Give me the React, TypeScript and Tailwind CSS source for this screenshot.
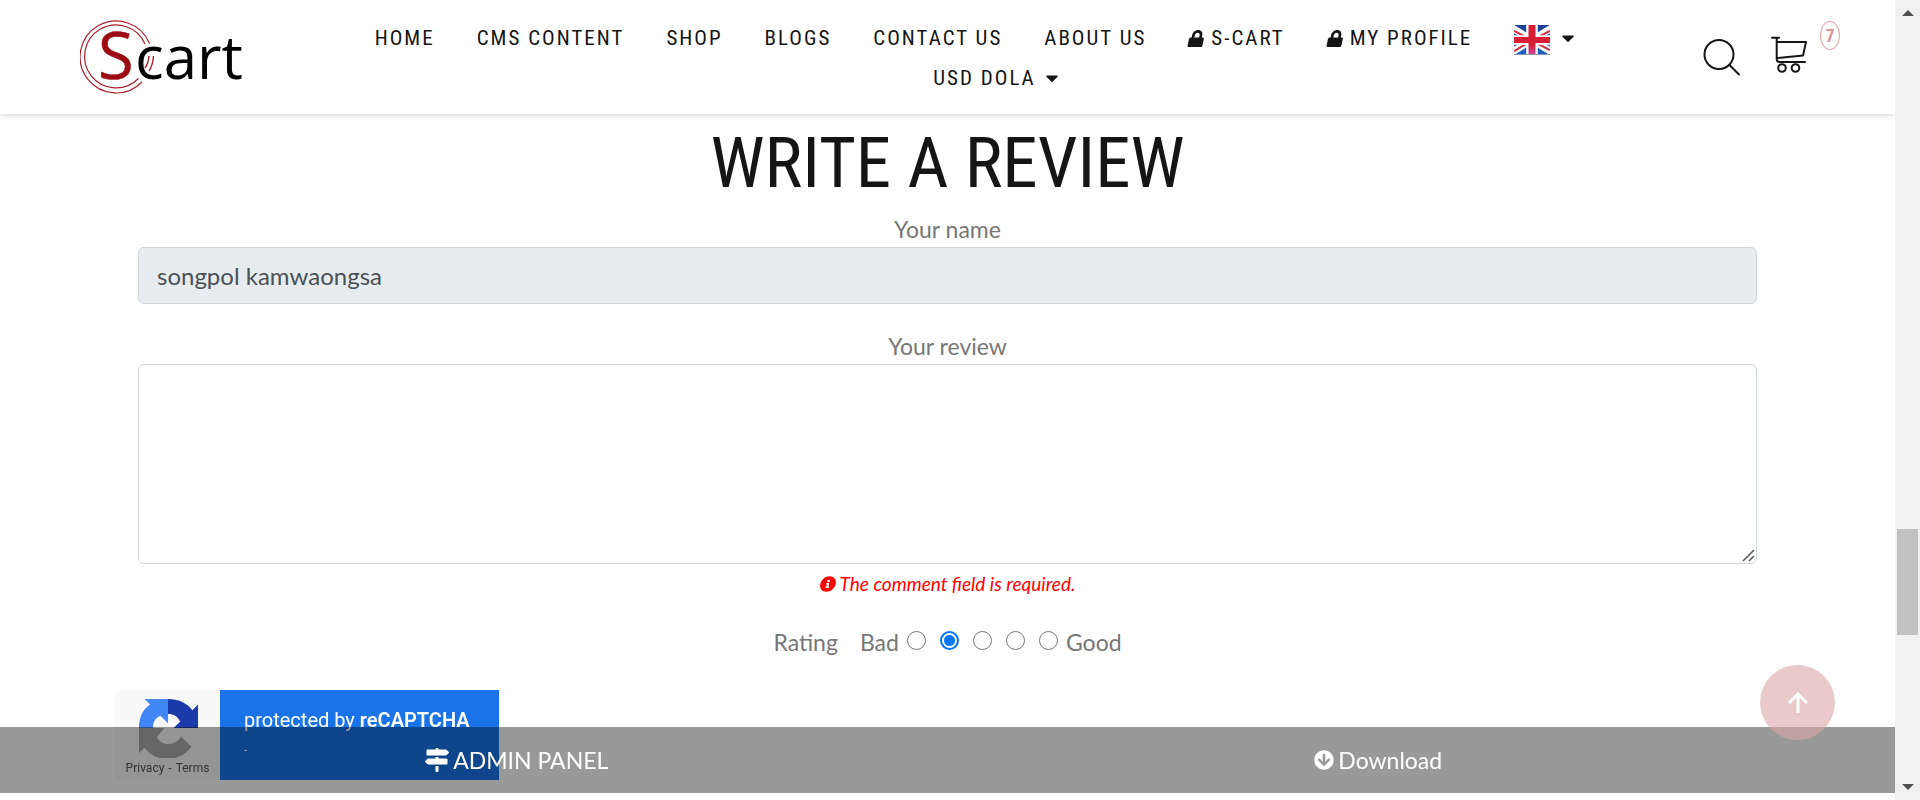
import React from "react";
import { FaArrowCircleDown, FaCaretDown, FaInfoCircle, FaLock, FaMapSigns } from "react-icons/fa";

const condensed = "font-['Roboto_Condensed','Liberation_Sans_Narrow',Roboto,sans-serif]";

function Logo() {
  return (
    <svg width="170" height="104" viewBox="0 -16 170 104" role="img" aria-label="Scart">
      <g fill="none" stroke="#a8202a" strokeWidth="1.2">
        <path d="M69.500 25.500A36 36 0 1 0 62 64" />
        <path d="M65 26A31.500 31.500 0 1 0 58.500 60.500" />
        <path d="M69 38q-.5 7-4 12M73.500 38q-.5 9-4.500 15" strokeWidth="1.400" />
      </g>
      <text x="18" y="61" fontSize="65" fill="#9c0c12" stroke="#9c0c12" strokeWidth=".6" className="font-['Open_Sans',sans-serif]">
        S
      </text>
      <text x="55" y="61" fontSize="60" fill="#000" className="font-['Open_Sans',sans-serif]">
        cart
      </text>
    </svg>
  );
}

function Flag() {
  return (
    <svg width="36" height="30" viewBox="0 0 31 31" preserveAspectRatio="none" role="img" aria-label="English">
      <defs>
        <linearGradient id="blue" x1="0" y1="0" x2="0" y2="1">
          <stop offset="0" stopColor="#1c3f94" />
          <stop offset="1" stopColor="#1e63c8" />
        </linearGradient>
        <linearGradient id="red" x1="0" y1="0" x2="0" y2="1">
          <stop offset=".65" stopColor="#d81e34" />
          <stop offset="1" stopColor="#c84a9a" />
        </linearGradient>
      </defs>
      <rect width="31" height="31" fill="url(#blue)" />
      <path d="M-3 2L34 29M34 2L-3 29" stroke="#fff" strokeWidth="7" />
      <path d="M0 6L11 13M31 6L20 13M0 27L11 19M31 26L20 19" stroke="#d8304a" strokeWidth="2" />
      <path d="M15.500 0V31M0 15.500H31" stroke="#fff" strokeWidth="10" />
      <path d="M0 15.500H31" stroke="#d81e34" strokeWidth="6" />
      <rect x="12.500" width="6" height="31" fill="url(#red)" />
      <path d="M0 30.500H31" stroke="#8b93b0" />
    </svg>
  );
}

const links: { label: string; locked?: boolean }[] = [
  { label: "Home" },
  { label: "CMS Content" },
  { label: "Shop" },
  { label: "Blogs" },
  { label: "Contact us" },
  { label: "About us" },
  { label: "S-Cart", locked: true },
  { label: "My profile", locked: true },
];

function Header() {
  return (
    <header className="flex h-[114px] items-start bg-white pl-20 pr-[55px] shadow-[0_1px_6px_rgba(0,0,0,0.18)]">
      <a href="#home" className="mt-0.5 shrink-0">
        <Logo />
      </a>
      <nav className="min-w-0 flex-1 px-[80px] pt-[22px]">
        <ul className={`flex flex-wrap justify-center gap-y-2 text-[21px] uppercase leading-8 tracking-[2px] text-[#151515] ${condensed}`}>
          {links.map(({ label, locked }) => (
            <li key={label} className="ml-[42px] first:ml-0">
              <a href="#nav" className="flex items-center gap-1.5">
                {locked && <FaLock className="size-[17px] -skew-x-12" />}
                {label}
              </a>
            </li>
          ))}
          <li className="ml-[42px]">
            <button type="button" className="flex h-8 items-center gap-2" aria-label="Language">
              <span className="pt-1"><Flag /></span>
              <FaCaretDown className="size-5" />
            </button>
          </li>
          <li className="ml-[42px]">
            <button type="button" className="flex items-center gap-1.5 uppercase tracking-[2px]">
              USD Dola
              <FaCaretDown className="size-5" />
            </button>
          </li>
        </ul>
      </nav>
      <div className="flex shrink-0 items-start text-[#151515]">
        <button type="button" aria-label="Search" className="mt-[38px]">
          <svg width="38" height="38" viewBox="0 0 38 38" fill="none" stroke="currentColor" strokeWidth="2" strokeLinecap="round">
            <circle cx="16" cy="16.500" r="14.500" />
            <path d="M26.500 27L36 36.500" />
          </svg>
        </button>
        <a href="#cart" className="ml-[29px] flex items-start" aria-label="Cart, 7 items">
          <svg className="mt-9" width="38" height="38" viewBox="0 0 38 38" fill="none" stroke="currentColor" strokeWidth="2" strokeLinecap="round" strokeLinejoin="round">
            <path d="M2 1.700H9M6.700 2V23Q6.700 26 9.500 26H35M7 6H36L33 19.500L7 22" />
            <circle cx="12" cy="32" r="3.800" />
            <circle cx="25.500" cy="32" r="3.800" />
          </svg>
          <span className={`ml-3 mt-[21px] flex h-[29px] w-5 items-center justify-center rounded-[50%] border border-[#e0a5a8] text-lg font-bold text-[#d99a9d] ${condensed}`}>
            7
          </span>
        </a>
      </div>
    </header>
  );
}

function ReviewForm() {
  return (
    <form className="mx-[138px] text-center text-[23px] leading-9 text-[#777]">
      <label htmlFor="name" className="block">Your name</label>
      <input
        id="name"
        readOnly
        defaultValue="songpol kamwaongsa"
        className="block h-[57px] w-full rounded-md border border-[#ced4da] bg-[#e9ecef] px-[18px] text-2xl text-[#495057] outline-none"
      />
      <label htmlFor="review" className="mt-6 block">Your review</label>
      <div className="relative">
        <textarea id="review" className="block h-[200px] w-full resize-none rounded-md border border-[#ced4da] bg-white px-[18px] py-2 text-2xl outline-none" />
        <svg className="absolute bottom-0.5 right-0.5" width="13" height="13" viewBox="0 0 13 13" stroke="#555" strokeWidth="1.500" aria-hidden="true">
          <path d="M1 12L12 1M7 12L12 7" />
        </svg>
      </div>
      <p className="mt-1 flex items-center justify-center gap-1 text-[19px] italic leading-8 text-[#f00]">
        <FaInfoCircle className="size-4 -skew-x-12" />
        The comment field is required.
      </p>
      <fieldset className="mt-6 flex items-center justify-center">
        <span className="mr-[22px]">Rating</span>
        <span className="mr-2">Bad</span>
        <span className="mb-1 flex gap-[14px]">
          {[1, 2, 3, 4, 5].map((n) => (
            <input
              key={n}
              type="radio"
              name="rating"
              aria-label={`${n} of 5`}
              defaultChecked={n === 2}
              className="size-[19px] appearance-none rounded-full border border-[#767676] bg-white checked:border-2 checked:border-[#0075ff] checked:bg-[radial-gradient(circle,#0075ff_5px,#fff_6px)]"
            />
          ))}
        </span>
        <span className="ml-2">Good</span>
      </fieldset>
    </form>
  );
}

function Recaptcha() {
  return (
    <div className="fixed bottom-5 left-[115px] flex h-[90px] font-[Roboto,sans-serif]">
      <div className="flex w-[105px] flex-col items-center rounded-l bg-[#f9f9f9] pt-2">
        <svg width="60" height="60" viewBox="0 0 64 64" aria-hidden="true">
          <path d="M64 32V7l-6 6C52 5 43 1 32 1v16c6 0 10 2 13 8l-7 7z" fill="#1c3aa9" />
          <path d="M32 1H7l6 6C5 12 1 21 1 32h15c0-7 3-11 8-13l8 8z" fill="#4285f4" />
          <path d="M1 32v27l6-6c6 8 14 12 25 12 10 0 19-5 25-13L46 41c-3 5-8 8-14 8-5 0-9-3-12-7l8-10z" fill="#ababab" />
        </svg>
        <p className="flex gap-1 text-xs leading-5 text-[#555]">
          <a href="#privacy">Privacy</a>-<a href="#terms">Terms</a>
        </p>
      </div>
      <div className="w-[279px] bg-[#1a73e8] pl-6 pt-4 text-xl leading-7 text-white">
        <p>protected by <b className="font-semibold">reCAPTCHA</b></p>
        <p className="text-xs leading-8">-</p>
      </div>
    </div>
  );
}

export default function App() {
  return (
    <div className="flex min-h-screen bg-white font-[Lato,sans-serif]">
      <div className="min-w-0 flex-1">
        <Header />
        <main>
          <h1 className={`pt-3 text-center text-[71px] uppercase leading-[74px] text-[#151515] ${condensed}`}>Write a review</h1>
          <div className="mt-[11px]">
            <ReviewForm />
          </div>
        </main>
        <Recaptcha />
        <div className="fixed bottom-[7px] left-0 right-[25px] grid h-[66px] grid-cols-2 items-center bg-black/40 px-[86px] text-[23px] text-white">
          <a href="#admin" className="flex items-center justify-center gap-1">
            <FaMapSigns className="size-6" />
            ADMIN PANEL
          </a>
          <a href="#download" className="flex items-center justify-center gap-1">
            <FaArrowCircleDown className="size-5" />
            Download
          </a>
        </div>
        <button type="button" aria-label="Back to top" className="fixed bottom-[60px] right-[85px] flex size-[75px] items-center justify-center rounded-full bg-[#dca5a9]/60 text-white">
          <svg width="22" height="22" viewBox="0 0 22 22" fill="none" stroke="currentColor" strokeWidth="3">
            <path d="M11 21V2M2 11L11 2L20 11" />
          </svg>
        </button>
      </div>
      <div className="flex w-[25px] shrink-0 flex-col items-center bg-[#f1f1f1] pb-[10px] pt-[10px]" aria-hidden="true">
        <svg width="12" height="6" viewBox="0 0 12 6"><path d="M0 6L6 0L12 6z" fill="#505050" /></svg>
        <div className="mt-[513px] h-[106px] w-[21px] bg-[#c1c1c1]" />
        <svg className="mt-auto" width="12" height="6" viewBox="0 0 12 6"><path d="M0 0L6 6L12 0z" fill="#505050" /></svg>
      </div>
    </div>
  );
}
